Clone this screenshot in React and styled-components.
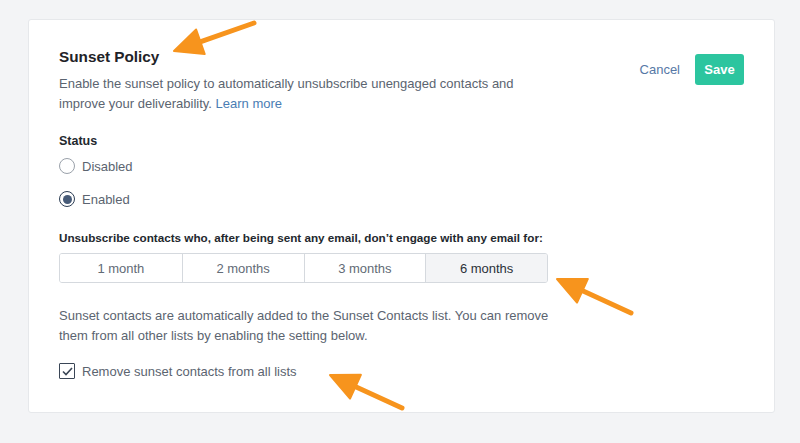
import React from "react";
import styled, { createGlobalStyle } from "styled-components";

const Global = createGlobalStyle`
  html, body { margin: 0; padding: 0; background: #f3f4f6; }
  body { font-family: "Liberation Sans", Arial, sans-serif; -webkit-font-smoothing: antialiased; }
`;

const Page = styled.div`
  position: relative;
  width: 800px;
  height: 443px;
  padding: 19px 25px 0 28px;
  box-sizing: border-box;
  overflow: hidden;
`;

const Card = styled.div`
  background: #fff;
  border: 1px solid #e6e8eb;
  border-radius: 3px;
  height: 394px;
  box-sizing: border-box;
  padding: 28px 30px 0 30px;
  display: flex;
  flex-direction: column;
`;

const Header = styled.div`
  display: flex;
  justify-content: space-between;
  align-items: flex-start;
`;

const Title = styled.h2`
  margin: 0 0 8px;
  font-size: 15.3px;
  font-weight: 700;
  color: #1f2328;
`;

const Text = styled.p`
  margin: ${p => p.$mt || 0}px 0 0;
  font-size: 13px;
  line-height: 20px;
  color: #5b6470;
  max-width: ${p => p.$w || 480}px;
`;

const Link = styled.a`
  color: #4a7db4;
  text-decoration: none;
`;

const Actions = styled.div`
  display: flex;
  align-items: center;
  gap: 15px;
  margin-top: 6px;
`;

const Cancel = styled.button`
  border: none;
  background: none;
  padding: 0;
  font: inherit;
  font-size: 13px;
  color: #5678a6;
`;

const Save = styled.button`
  border: none;
  background: #2cc59f;
  color: #fff;
  font: inherit;
  font-weight: 700;
  font-size: 13px;
  width: 49px;
  height: 31px;
  border-radius: 3px;
  padding: 0;
`;

const Label = styled.div`
  font-size: ${p => p.$fs || 12.5}px;
  font-weight: 700;
  color: #23282e;
  margin-top: ${p => p.$mt || 0}px;
`;

const RadioRow = styled.label`
  display: flex;
  align-items: center;
  gap: 7px;
  font-size: 13px;
  color: #5b6470;
  height: 20px;
  margin-top: ${p => p.$mt}px;
`;

const RadioCircle = styled.span`
  width: 14px;
  height: 14px;
  border-radius: 50%;
  border: 1.5px solid ${p => (p.$on ? "#2d3e55" : "#9aa1aa")};
  display: flex;
  align-items: center;
  justify-content: center;
  box-sizing: content-box;
  &::after {
    content: "";
    display: ${p => (p.$on ? "block" : "none")};
    width: 9px;
    height: 9px;
    border-radius: 50%;
    background: #475b78;
  }
`;

const Segments = styled.div`
  display: grid;
  grid-template-columns: repeat(4, 1fr);
  width: 489px;
  height: 30px;
  margin-top: 9px;
  border: 1px solid #d5d9de;
  border-radius: 3px;
  box-sizing: border-box;
  overflow: hidden;
`;

const Segment = styled.div`
  display: flex;
  align-items: center;
  justify-content: center;
  font-size: 13px;
  color: ${p => (p.$active ? "#2b3138" : "#626b76")};
  background: ${p => (p.$active ? "#f3f4f6" : "#fff")};
  border-left: ${p => (p.$first ? "none" : "1px solid #d5d9de")};
`;

const CheckRow = styled.label`
  display: flex;
  align-items: center;
  gap: 7px;
  font-size: 13px;
  color: #5b6470;
  margin-top: 17px;
`;

const CheckBox = styled.span`
  width: 14px;
  height: 14px;
  border: 1.5px solid #3a4656;
  border-radius: 1px;
  display: flex;
  align-items: center;
  justify-content: center;
`;

const Arrow = styled.svg`
  position: absolute;
  left: 0;
  top: 0;
  pointer-events: none;
`;

function ArrowShape({ x1, y1, x2, y2 }) {
  const dx = x2 - x1, dy = y2 - y1;
  const len = Math.hypot(dx, dy);
  const ux = dx / len, uy = dy / len;
  const hl = 28, hw = 13;
  const bx = x2 - ux * hl, by = y2 - uy * hl;
  const px = -uy, py = ux;
  return (
    <g>
      <line x1={x1} y1={y1} x2={bx + ux * 4} y2={by + uy * 4} stroke="#f7941d" strokeWidth="5" strokeLinecap="round" />
      <polygon
        points={`${x2},${y2} ${bx + px * hw},${by + py * hw} ${bx - px * hw},${by - py * hw}`}
        fill="#f7941d"
        stroke="#f7941d"
        strokeWidth="2"
        strokeLinejoin="round"
      />
    </g>
  );
}

export default function App() {
  const months = ["1 month", "2 months", "3 months", "6 months"];
  return (
    <Page>
      <Global />
      <Card>
        <Header>
          <div>
            <Title>Sunset Policy</Title>
            <Text>
              Enable the sunset policy to automatically unsubscribe unengaged contacts and
              improve your deliverability. <Link href="#">Learn more</Link>
            </Text>
          </div>
          <Actions>
            <Cancel>Cancel</Cancel>
            <Save>Save</Save>
          </Actions>
        </Header>
        <Label $mt={20}>Status</Label>
        <RadioRow $mt={8}>
          <RadioCircle />
          Disabled
        </RadioRow>
        <RadioRow $mt={13}>
          <RadioCircle $on />
          Enabled
        </RadioRow>
        <Label $mt={22} $fs={11.7}>Unsubscribe contacts who, after being sent any email, don’t engage with any email for:</Label>
        <Segments>
          {months.map((m, i) => (
            <Segment key={m} $first={i === 0} $active={i === 3}>{m}</Segment>
          ))}
        </Segments>
        <Text $w={490} $mt={23}>
          Sunset contacts are automatically added to the Sunset Contacts list. You can remove
          them from all other lists by enabling the setting below.
        </Text>
        <CheckRow>
          <CheckBox>
            <svg width="11" height="9" viewBox="0 0 11 9">
              <path d="M1 4.5 L4 7.5 L10 1" fill="none" stroke="#3a4656" strokeWidth="1.6" />
            </svg>
          </CheckBox>
          Remove sunset contacts from all lists
        </CheckRow>
      </Card>
      <Arrow width="800" height="443">
        <ArrowShape x1={254} y1={23} x2={174} y2={51} />
        <ArrowShape x1={631} y1={313} x2={557} y2={279} />
        <ArrowShape x1={402} y1={408} x2={330} y2={375} />
      </Arrow>
    </Page>
  );
}
